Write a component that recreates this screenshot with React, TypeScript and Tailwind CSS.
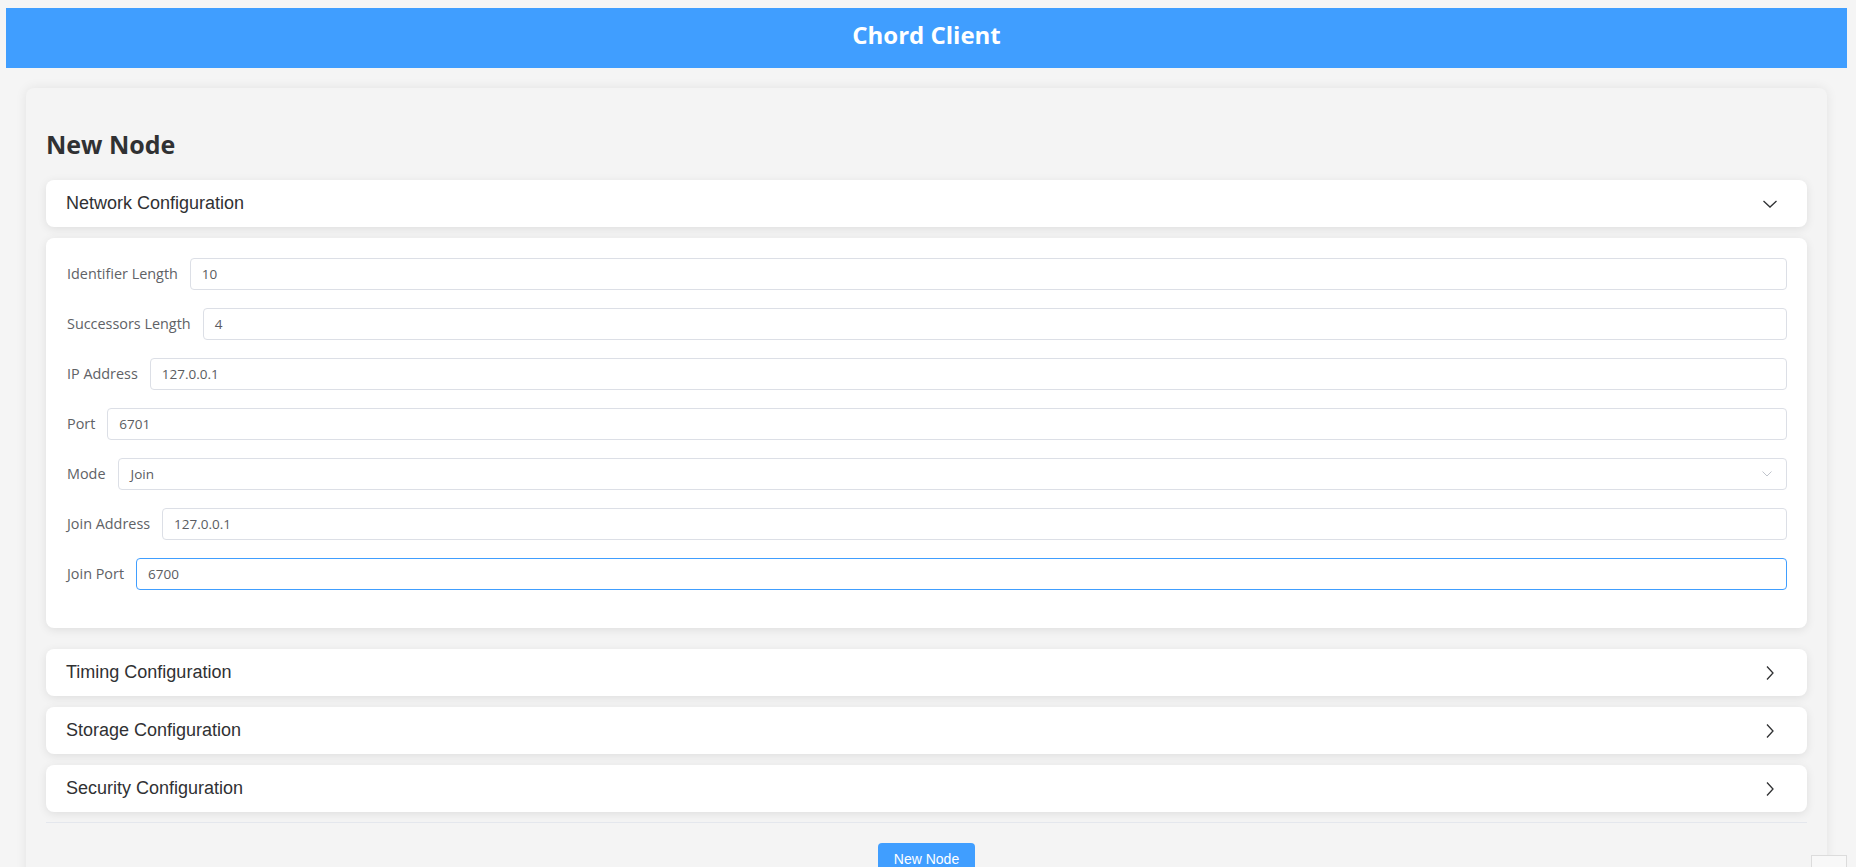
import React from "react";

const fields: { label: string; value: string; select?: boolean; focused?: boolean }[] = [
  { label: "Identifier Length", value: "10" },
  { label: "Successors Length", value: "4" },
  { label: "IP Address", value: "127.0.0.1" },
  { label: "Port", value: "6701" },
  { label: "Mode", value: "Join", select: true },
  { label: "Join Address", value: "127.0.0.1" },
  { label: "Join Port", value: "6700", focused: true },
];

function ChevronDown() {
  return (
    <svg width="14" height="14" viewBox="0 0 14 14" className="block">
      <path d="M0.5 4 L7 10 L13.5 4" fill="none" stroke="#303133" strokeWidth="1.3" />
    </svg>
  );
}

function ChevronRight() {
  return (
    <svg width="14" height="14" viewBox="0 0 14 14" className="block">
      <path d="M4 0.5 L10 7 L4 13.5" fill="none" stroke="#303133" strokeWidth="1.3" />
    </svg>
  );
}

function Header({ title, open }: { title: string; open?: boolean }) {
  return (
    <div className="h-[47px] bg-white rounded-[8px] shadow-[0_2px_10px_0_rgba(0,0,0,0.09)] flex items-center justify-between pl-[20px] pr-[30px]">
      <span className="text-[18px] text-[#303133] font-['Liberation_Sans',Arial,sans-serif]">{title}</span>
      {open ? <ChevronDown /> : <ChevronRight />}
    </div>
  );
}

export default function App() {
  return (
    <div className="min-h-screen bg-[#f5f5f5] pt-[8px] pl-[6px] pr-[9px] pb-[40px] font-['Open_Sans',sans-serif]">
      <header className="h-[60px] bg-[#409eff] flex items-center justify-center pb-[7px]">
        <h1 className="text-white font-bold text-[24px] font-['Open_Sans',sans-serif]">Chord Client</h1>
      </header>

      <div className="mx-[20px] mt-[20px] rounded-[8px] bg-[#f4f4f4] shadow-[0_0_12px_0_rgba(0,0,0,0.08)] px-[20px] pt-[37px] pb-[40px]">
        <h2 className="text-[25px] leading-[38px] font-bold text-[#303133] mb-[17px]">New Node</h2>

        <div className="mb-[11px]">
          <Header title="Network Configuration" open />
        </div>

        <div className="bg-white rounded-[8px] shadow-[0_2px_10px_0_rgba(0,0,0,0.09)] pt-[20px] pb-[20px] pl-[21px] pr-[20px] mb-[21px]">
          {fields.map((f) => (
            <div key={f.label} className="flex items-center mb-[18px]">
              <span className="text-[14.4px] text-[#606266] mr-[12px] whitespace-nowrap">{f.label}</span>
              <div
                className={`flex-1 h-[32px] rounded-[4px] border bg-white flex items-center justify-between pl-[11px] pr-[14px] ${
                  f.focused ? "border-[#409eff]" : "border-[#dcdfe6]"
                }`}
              >
                <span className={`text-[13.5px] text-[#5a5c61] ${f.select ? "pl-[1px]" : ""}`}>{f.value}</span>
                {f.select && (
                  <svg width="10" height="6" viewBox="0 0 10 6" className="block">
                    <path d="M0.5 0.5 L5 5 L9.5 0.5" fill="none" stroke="#c0c4cc" strokeWidth="1" />
                  </svg>
                )}
              </div>
            </div>
          ))}
        </div>

        <div className="mb-[11px]">
          <Header title="Timing Configuration" />
        </div>
        <div className="mb-[11px]">
          <Header title="Storage Configuration" />
        </div>
        <div>
          <Header title="Security Configuration" />
        </div>

        <div className="border-t border-[#e4e7ed] mt-[10px]" />

        <div className="flex justify-center mt-[20px]">
          <button className="w-[97px] h-[32px] rounded-[4px] bg-[#409eff] text-white text-[14px] font-['Liberation_Sans',Arial,sans-serif]">
            New Node
          </button>
        </div>
      </div>

      <div className="fixed left-[1811px] top-[855px] w-[36px] h-[24px] border border-[#dcdcdc] bg-[#f8f8f8]" />
    </div>
  );
}
